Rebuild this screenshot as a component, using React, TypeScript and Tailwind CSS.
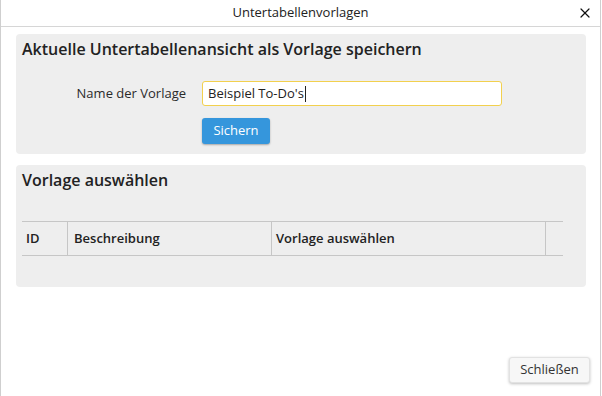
import { X } from 'lucide-react';

export default function App() {
  return (
    <div className="w-[602px] h-[396px] bg-white font-['Open_Sans',sans-serif] text-[#333]">
      <div className="w-[601px] h-[396px] border-x border-[#cfcfcf] flex flex-col">
        {/* Titelleiste */}
        <div className="relative h-[27px] shrink-0 border-b border-[#d6d6d6] flex items-center justify-center">
          <span className="text-[13px] text-[#222]">Untertabellenvorlagen</span>
          <X className="absolute right-[7px] top-[5px] w-[16px] h-[16px] text-[#111]" strokeWidth={1.8} />
        </div>

        <div className="flex-1 flex flex-col pl-[15px] pr-[14px]">
          {/* Vorlage speichern */}
          <section className="mt-[7px] h-[120px] rounded-[4px] bg-[#eeeeee] pl-[6px] pt-[3px]">
            <h2 className="text-[16px] font-semibold leading-[24px] text-[#222]">
              Aktuelle Untertabellenansicht als Vorlage speichern
            </h2>
            <div className="flex items-center mt-[20px]">
              <label className="w-[164px] text-right text-[13px] text-[#2a2a2a]">Name der Vorlage</label>
              <div className="ml-[16px] w-[300px] h-[25px] rounded-[3px] border border-[#f2d04e] bg-white flex items-center px-[5px] text-[13px] text-[#222]">
                Beispiel To-Do's<span className="w-px h-[16px] bg-[#222] ml-px" />
              </div>
            </div>
            <div className="mt-[11px] ml-[180px]">
              <button className="w-[68px] h-[26px] rounded-[3px] bg-[#3596dc] text-white text-[13px] shadow-[0_1px_2px_rgba(0,0,0,0.3)]">
                Sichern
              </button>
            </div>
          </section>

          {/* Vorlage auswählen */}
          <section className="mt-[11px] h-[122px] rounded-[4px] bg-[#eeeeee] pl-[6px] pt-[3px]">
            <h2 className="text-[16px] font-semibold leading-[24px] text-[#222]">Vorlage auswählen</h2>
            <div className="mt-[29px] w-[541px] h-[35px] border-y border-[#c6c6c6] flex text-[13px] font-semibold text-[#222]">
              <div className="w-[46px] flex items-center pl-[4px] border-r border-[#c6c6c6]">ID</div>
              <div className="w-[204px] flex items-center pl-[6px] border-r border-[#c6c6c6]">Beschreibung</div>
              <div className="w-[274px] flex items-center pl-[4px] border-r border-[#c6c6c6]">Vorlage auswählen</div>
              <div className="flex-1" />
            </div>
          </section>

          <div className="flex-1 flex items-end justify-end pb-[13px]">
            <button className="w-[81px] h-[26px] rounded-[3px] bg-[#f7f7f7] border border-[#e2e2e2] text-[13px] text-[#333] shadow-[0_1px_3px_rgba(0,0,0,0.25)] mr-[-4px]">
              Schließen
            </button>
          </div>
        </div>
      </div>
    </div>
  );
}
